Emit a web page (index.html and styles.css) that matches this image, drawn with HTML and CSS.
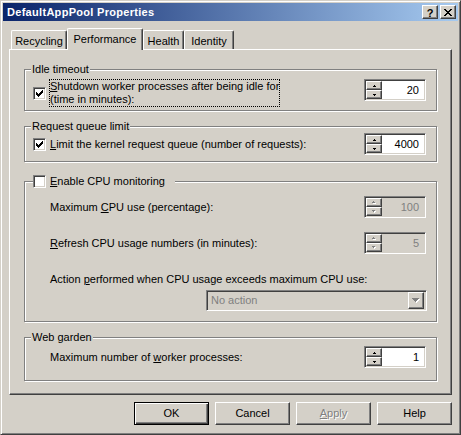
FILE: index.html
```html
<!DOCTYPE html>
<html lang="en">
<head>
<meta charset="utf-8">
<title>DefaultAppPool Properties</title>
<link rel="stylesheet" href="styles.css">
</head>
<body>
<div class="window">
  <div class="titlebar">
    <span class="title">DefaultAppPool Properties</span>
    <div class="caption-btns">
      <span class="cbtn cbtn-help">?</span>
      <span class="cbtn"><svg class="px" width="8" height="7" viewBox="0 0 8 7"><path d="M0 0h2v1H0zM6 0h2v1H6zM1 1h2v1H1zM5 1h2v1H5zM2 2h4v1H2zM3 3h2v1H3zM2 4h4v1H2zM1 5h2v1H1zM5 5h2v1H5zM0 6h2v1H0zM6 6h2v1H6z"/></svg></span>
    </div>
  </div>
  <div class="client">
    <div class="tabs">
      <div class="tab tab-recycling">Recycling</div>
      <div class="tab tab-performance active">Performance</div>
      <div class="tab tab-health">Health</div>
      <div class="tab tab-identity">Identity</div>
    </div>
    <div class="panel">
      <fieldset class="group g-idle">
        <legend>Idle timeout</legend>
        <div class="row row-top">
          <span class="check"><svg class="px" width="7" height="7" viewBox="0 0 7 7"><path d="M0 2h1v3H0zM1 3h1v3H1zM2 4h1v3H2zM3 3h1v3H3zM4 2h1v3H4zM5 1h1v3H5zM6 0h1v3H6z"/></svg></span>
          <span class="clabel focus"><u>S</u>hutdown worker processes after being idle for<br>(time in minutes):</span>
          <div class="spin">
            <div class="spin-btns">
              <span class="sbtn"><svg class="px" width="3" height="2" viewBox="0 0 3 2"><path d="M1 0h1v1H1zM0 1h3v1H0z"/></svg></span>
              <span class="sbtn"><svg class="px" width="3" height="2" viewBox="0 0 3 2"><path d="M0 0h3v1H0zM1 1h1v1H1z"/></svg></span>
            </div>
            <span class="spin-val">20</span>
          </div>
        </div>
      </fieldset>

      <fieldset class="group g-request">
        <legend>Request queue limit</legend>
        <div class="row">
          <span class="check"><svg class="px" width="7" height="7" viewBox="0 0 7 7"><path d="M0 2h1v3H0zM1 3h1v3H1zM2 4h1v3H2zM3 3h1v3H3zM4 2h1v3H4zM5 1h1v3H5zM6 0h1v3H6z"/></svg></span>
          <span class="clabel"><u>L</u>imit the kernel request queue (number of requests):</span>
          <div class="spin">
            <div class="spin-btns">
              <span class="sbtn"><svg class="px" width="3" height="2" viewBox="0 0 3 2"><path d="M1 0h1v1H1zM0 1h3v1H0z"/></svg></span>
              <span class="sbtn"><svg class="px" width="3" height="2" viewBox="0 0 3 2"><path d="M0 0h3v1H0zM1 1h1v1H1z"/></svg></span>
            </div>
            <span class="spin-val">4000</span>
          </div>
        </div>
      </fieldset>

      <fieldset class="group g-cpu">
        <legend class="legend-check">
          <span class="legend-inner">
            <span class="check"></span>
            <span class="clabel"><u>E</u>nable CPU monitoring</span>
          </span>
        </legend>
        <div class="irow">
          <span>Maximum <u>C</u>PU use (percentage):</span>
          <div class="spin disabled">
            <div class="spin-btns">
              <span class="sbtn"><svg class="px" width="4" height="3" viewBox="0 0 4 3"><path class="em" d="M2 1h1v1H2zM1 2h3v1H1z"/><path class="gr" d="M1 0h1v1H1zM0 1h3v1H0z"/></svg></span>
              <span class="sbtn"><svg class="px" width="4" height="3" viewBox="0 0 4 3"><path class="em" d="M1 1h3v1H1zM2 2h1v1H2z"/><path class="gr" d="M0 0h3v1H0zM1 1h1v1H1z"/></svg></span>
            </div>
            <span class="spin-val">100</span>
          </div>
        </div>
        <div class="irow irow-2">
          <span><u>R</u>efresh CPU usage numbers (in minutes):</span>
          <div class="spin disabled">
            <div class="spin-btns">
              <span class="sbtn"><svg class="px" width="4" height="3" viewBox="0 0 4 3"><path class="em" d="M2 1h1v1H2zM1 2h3v1H1z"/><path class="gr" d="M1 0h1v1H1zM0 1h3v1H0z"/></svg></span>
              <span class="sbtn"><svg class="px" width="4" height="3" viewBox="0 0 4 3"><path class="em" d="M1 1h3v1H1zM2 2h1v1H2z"/><path class="gr" d="M0 0h3v1H0zM1 1h1v1H1z"/></svg></span>
            </div>
            <span class="spin-val">5</span>
          </div>
        </div>
        <div class="irow irow-3">
          <span>Action <u>p</u>erformed when CPU usage exceeds maximum CPU use:</span>
        </div>
        <div class="combo-row">
          <div class="combo">
            <span class="combo-text">No action</span>
            <span class="combo-btn"><svg class="px" width="8" height="5" viewBox="0 0 8 5"><path class="em" d="M1 1h7v1H1zM2 2h5v1H2zM3 3h3v1H3zM4 4h1v1H4z"/><path class="gr" d="M0 0h7v1H0zM1 1h5v1H1zM2 2h3v1H2zM3 3h1v1H3z"/></svg></span>
          </div>
        </div>
      </fieldset>

      <fieldset class="group g-web">
        <legend>Web garden</legend>
        <div class="irow">
          <span>Maximum number of <u>w</u>orker processes:</span>
          <div class="spin">
            <div class="spin-btns">
              <span class="sbtn"><svg class="px" width="3" height="2" viewBox="0 0 3 2"><path d="M1 0h1v1H1zM0 1h3v1H0z"/></svg></span>
              <span class="sbtn"><svg class="px" width="3" height="2" viewBox="0 0 3 2"><path d="M0 0h3v1H0zM1 1h1v1H1z"/></svg></span>
            </div>
            <span class="spin-val">1</span>
          </div>
        </div>
      </fieldset>
    </div>
    <div class="buttons">
      <span class="btn default">OK</span>
      <span class="btn">Cancel</span>
      <span class="btn disabled"><span><u>A</u>pply</span></span>
      <span class="btn">Help</span>
    </div>
  </div>
</div>
</body>
</html>
```

FILE: styles.css
```css
* { box-sizing: border-box; }
html, body { margin: 0; padding: 0; }
body {
  width: 461px;
  height: 435px;
  overflow: hidden;
  background: #D4D0C8;
  font-family: "Liberation Sans", Arial, sans-serif;
  font-size: 11px;
  line-height: 13px;
  color: #000;
}
u { text-decoration: underline; }
.px { display: block; shape-rendering: crispEdges; fill: currentColor; }

.window {
  width: 461px;
  height: 435px;
  display: flex;
  flex-direction: column;
  padding: 2px;
  border: 1px solid;
  border-color: #D4D0C8 #404040 #404040 #D4D0C8;
  box-shadow: inset 1px 1px #fff, inset -1px -1px #808080;
  background: #D4D0C8;
}

.titlebar {
  height: 18px;
  flex: none;
  display: flex;
  align-items: center;
  padding: 0 2px;
  background: linear-gradient(to right, #0A246A, #A6CAF0);
}
.title {
  flex: 1;
  padding-left: 2px;
  color: #fff;
  font-weight: bold;
  letter-spacing: 0.3px;
  white-space: nowrap;
}
.caption-btns { display: flex; gap: 2px; }
.cbtn {
  width: 16px;
  height: 14px;
  display: flex;
  align-items: center;
  justify-content: center;
  background: #D4D0C8;
  border: 1px solid;
  border-color: #fff #404040 #404040 #fff;
  box-shadow: inset -1px -1px #808080;
  color: #000;
}
.cbtn-help { font-weight: bold; font-size: 11px; line-height: 12px; padding-top: 1px; }

.client {
  flex: 1;
  display: flex;
  flex-direction: column;
  padding: 7px 6px 0;
}

.tabs {
  height: 21px;
  flex: none;
  display: flex;
  align-items: flex-end;
  padding-left: 2px;
}
.tab {
  height: 19px;
  padding-top: 4px;
  text-align: center;
  white-space: nowrap;
  border: 1px solid;
  border-bottom: 0;
  border-color: #fff #404040 #404040 #fff;
  border-radius: 2px 2px 0 0;
  box-shadow: inset -1px 0 #808080;
}
.tab-recycling { width: 56px; }
.tab-performance { width: 76px; }
.tab-health { width: 41px; }
.tab-identity { width: 50px; }
.tab.active {
  height: 22px;
  margin-bottom: -1px;
  position: relative;
  z-index: 1;
  background: #D4D0C8;
}

.panel {
  height: 346px;
  flex: none;
  display: flex;
  flex-direction: column;
  border: 1px solid;
  border-color: #fff #404040 #404040 #fff;
  box-shadow: inset -1px -1px #808080;
  padding: 13px 14px 0;
}

.group {
  margin: 0;
  min-width: 0;
  border: 1px solid #808080;
  box-shadow: inset 1px 1px #fff, 1px 1px #fff;
  padding: 0 10px 0 8px;
}
.group legend {
  padding: 0 1px;
  margin-left: -2px;
  line-height: 13px;
  background: #D4D0C8;
}
.group legend.legend-check {
  margin-left: 0;
  padding: 0;
  width: 142px;
}
.legend-inner { display: flex; align-items: center; }

.g-idle { padding-top: 3px; padding-bottom: 3px; }
.g-request { margin-top: 9px; padding-bottom: 6px; }
.g-cpu { margin-top: 12px; padding-top: 7px; padding-bottom: 10px; }
.g-web { margin-top: 9px; padding-top: 2px; padding-bottom: 12px; }

.row { display: flex; align-items: center; }
.row-top .spin { align-self: flex-start; }
.clabel {
  margin-left: 3px;
  border: 1px solid transparent;
  white-space: nowrap;
}
.clabel.focus { border: 1px dotted #000; }
.row .spin { margin-left: auto; }

.irow {
  display: flex;
  align-items: center;
  padding-left: 17px;
  white-space: nowrap;
}
.irow .spin { margin-left: auto; }
.irow-2 { margin-top: 14px; }
.irow-3 { margin-top: 19px; }

.check {
  width: 13px;
  height: 13px;
  flex: none;
  display: flex;
  align-items: center;
  justify-content: center;
  background: #fff;
  border: 1px solid;
  border-color: #808080 #fff #fff #808080;
  box-shadow: inset 1px 1px #404040, inset -1px -1px #D4D0C8;
}

.spin {
  width: 62px;
  height: 22px;
  flex: none;
  display: flex;
  padding: 1px;
  background: #fff;
  border: 1px solid;
  border-color: #808080 #fff #fff #808080;
  box-shadow: inset 1px 1px #404040, inset -1px -1px #D4D0C8;
}
.spin.disabled { background: #D4D0C8; color: #808080; }
.spin-btns { width: 16px; flex: none; display: flex; flex-direction: column; }
.sbtn {
  height: 9px;
  flex: none;
  display: flex;
  align-items: center;
  justify-content: center;
  background: #D4D0C8;
  color: #000;
  border: 1px solid;
  border-color: #fff #404040 #404040 #fff;
  box-shadow: inset -1px -1px #808080;
}
.spin-val { flex: 1; text-align: right; padding-right: 5px; line-height: 18px; }
.em { fill: #fff; }
.gr { fill: #808080; }

.combo-row { display: flex; justify-content: flex-end; margin-top: 4px; margin-right: -1px; }
.combo {
  width: 221px;
  height: 21px;
  display: flex;
  align-items: center;
  padding: 2px;
  background: #D4D0C8;
  border: 1px solid;
  border-color: #808080 #fff #fff #808080;
  box-shadow: inset 1px 1px #404040, inset -1px -1px #D4D0C8;
}
.combo-text { flex: 1; color: #808080; padding-left: 2px; }
.combo-btn {
  width: 16px;
  height: 17px;
  flex: none;
  display: flex;
  align-items: center;
  justify-content: center;
  background: #D4D0C8;
  border: 1px solid;
  border-color: #fff #404040 #404040 #fff;
  box-shadow: inset -1px -1px #808080;
}

.buttons {
  flex: none;
  display: flex;
  justify-content: flex-end;
  gap: 6px;
  margin-top: 7px;
}
.btn {
  width: 75px;
  height: 23px;
  display: flex;
  align-items: center;
  justify-content: center;
  background: #D4D0C8;
  border: 1px solid;
  border-color: #fff #404040 #404040 #fff;
  box-shadow: inset -1px -1px #808080;
}
.btn.default {
  border-color: #000;
  box-shadow: inset 1px 1px #fff, inset -1px -1px #404040, inset -2px -2px #808080;
}
.btn.disabled { color: #808080; text-shadow: 1px 1px #fff; }
```
